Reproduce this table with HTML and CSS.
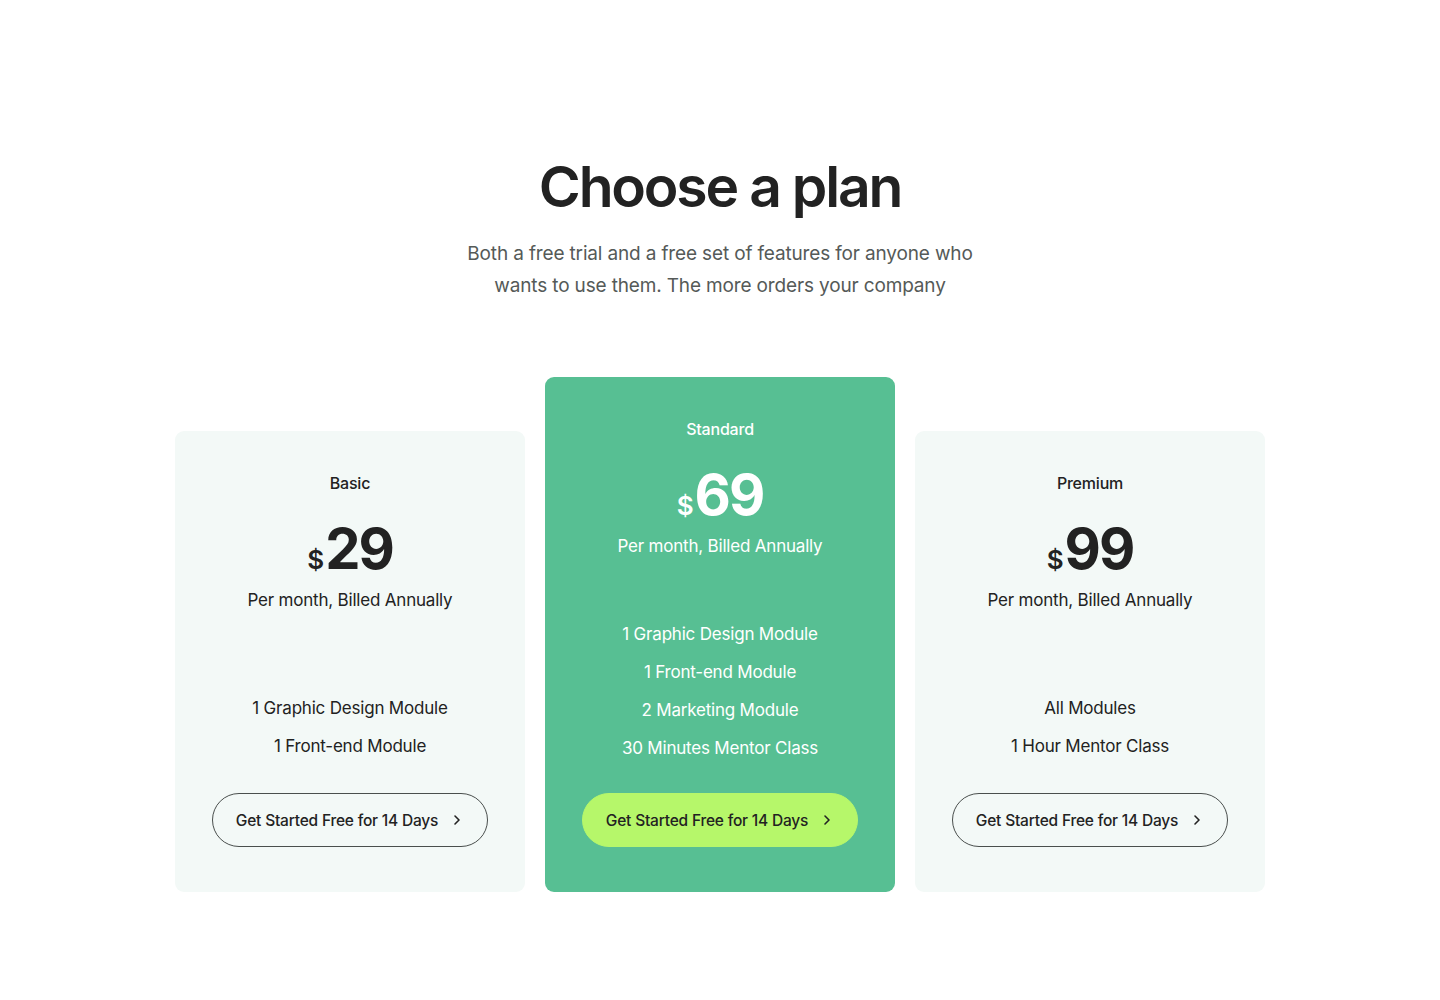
FILE: index.html
```html
<!DOCTYPE html>
<html lang="en">
<head>
<meta charset="utf-8">
<title>Choose a plan</title>
<link rel="stylesheet" href="styles.css">
</head>
<body>
<section class="pricing">
  <header class="head">
    <h1 class="title">Choose a plan</h1>
    <p class="subtitle">Both a free trial and a free set of features for anyone who<br>wants to use them. The more orders your company</p>
  </header>
  <div class="cards">
    <div class="card">
      <div class="plan">Basic</div>
      <div class="price"><span class="cur">$</span><span class="amt">29</span></div>
      <div class="per">Per month, Billed Annually</div>
      <ul class="features">
        <li>1 Graphic Design Module</li>
        <li>1 Front-end Module</li>
      </ul>
      <a class="btn" href="#">Get Started Free for 14 Days
        <svg class="chev" width="14" height="14" viewBox="0 0 14 14"><path d="M5 3l4 4-4 4" fill="none" stroke="currentColor" stroke-width="1.6" stroke-linecap="round" stroke-linejoin="round"/></svg>
      </a>
    </div>
    <div class="card featured">
      <div class="plan">Standard</div>
      <div class="price"><span class="cur">$</span><span class="amt">69</span></div>
      <div class="per">Per month, Billed Annually</div>
      <ul class="features">
        <li>1 Graphic Design Module</li>
        <li>1 Front-end Module</li>
        <li>2 Marketing Module</li>
        <li>30 Minutes Mentor Class</li>
      </ul>
      <a class="btn" href="#">Get Started Free for 14 Days
        <svg class="chev" width="14" height="14" viewBox="0 0 14 14"><path d="M5 3l4 4-4 4" fill="none" stroke="currentColor" stroke-width="1.6" stroke-linecap="round" stroke-linejoin="round"/></svg>
      </a>
    </div>
    <div class="card">
      <div class="plan">Premium</div>
      <div class="price"><span class="cur">$</span><span class="amt">99</span></div>
      <div class="per">Per month, Billed Annually</div>
      <ul class="features">
        <li>All Modules</li>
        <li>1 Hour Mentor Class</li>
      </ul>
      <a class="btn" href="#">Get Started Free for 14 Days
        <svg class="chev" width="14" height="14" viewBox="0 0 14 14"><path d="M5 3l4 4-4 4" fill="none" stroke="currentColor" stroke-width="1.6" stroke-linecap="round" stroke-linejoin="round"/></svg>
      </a>
    </div>
  </div>
</section>
</body>
</html>
```
FILE: styles.css
```css
* { box-sizing: border-box; }
html, body { margin: 0; padding: 0; background: #ffffff; }
body {
  font-family: "Inter", "Lato", "Liberation Sans", sans-serif;
  color: #222222;
}
.pricing {
  padding-top: 149px;
  display: flex;
  flex-direction: column;
  align-items: center;
}
.head { text-align: center; }
.title {
  margin: 0;
  font-size: 57px;
  line-height: 76px;
  font-weight: 600;
  letter-spacing: -2.2px;
  color: #222222;
}
.subtitle {
  margin: 13px 0 0;
  font-size: 19px;
  line-height: 32px;
  color: #555a58;
  letter-spacing: -0.15px;
}
.cards {
  margin-top: 75px;
  display: flex;
  align-items: flex-end;
  gap: 20px;
}
.card {
  width: 350px;
  height: 461px;
  background: #f3f9f7;
  border-radius: 9px;
  padding: 41px 36px 45px;
  display: flex;
  flex-direction: column;
  align-items: center;
  text-align: center;
}
.card.featured {
  height: 515px;
  background: #57bf93;
  color: #ffffff;
}
.plan {
  font-size: 16px;
  line-height: 22px;
  font-weight: 500;
  letter-spacing: -0.2px;
}
.price {
  margin-top: 27px;
  display: flex;
  align-items: baseline;
  justify-content: center;
  line-height: 1;
}
.cur {
  font-size: 26px;
  font-weight: 600;
  margin-right: 1px;
}
.amt {
  font-size: 56px;
  font-weight: 700;
  letter-spacing: -2px;
}
.per {
  margin-top: 11px;
  font-size: 17px;
  line-height: 24px;
  letter-spacing: -0.2px;
}
.features {
  list-style: none;
  margin: auto 0 0;
  padding: 0;
}
.features li {
  font-size: 17px;
  line-height: 24px;
  letter-spacing: -0.2px;
  margin-top: 14px;
}
.features li:first-child { margin-top: 0; }
.btn {
  margin-top: 35px;
  width: 276px;
  height: 54px;
  border-radius: 27px;
  border: 1.5px solid #4a4f4d;
  display: flex;
  align-items: center;
  justify-content: center;
  gap: 12px;
  font-size: 15.5px;
  font-weight: 500;
  letter-spacing: -0.2px;
  color: #222222;
  text-decoration: none;
}
.featured .features { margin-bottom: -2px; }
.featured .btn {
  background: #b6f76a;
  border-color: #b6f76a;
}
.chev { display: block; }
```
